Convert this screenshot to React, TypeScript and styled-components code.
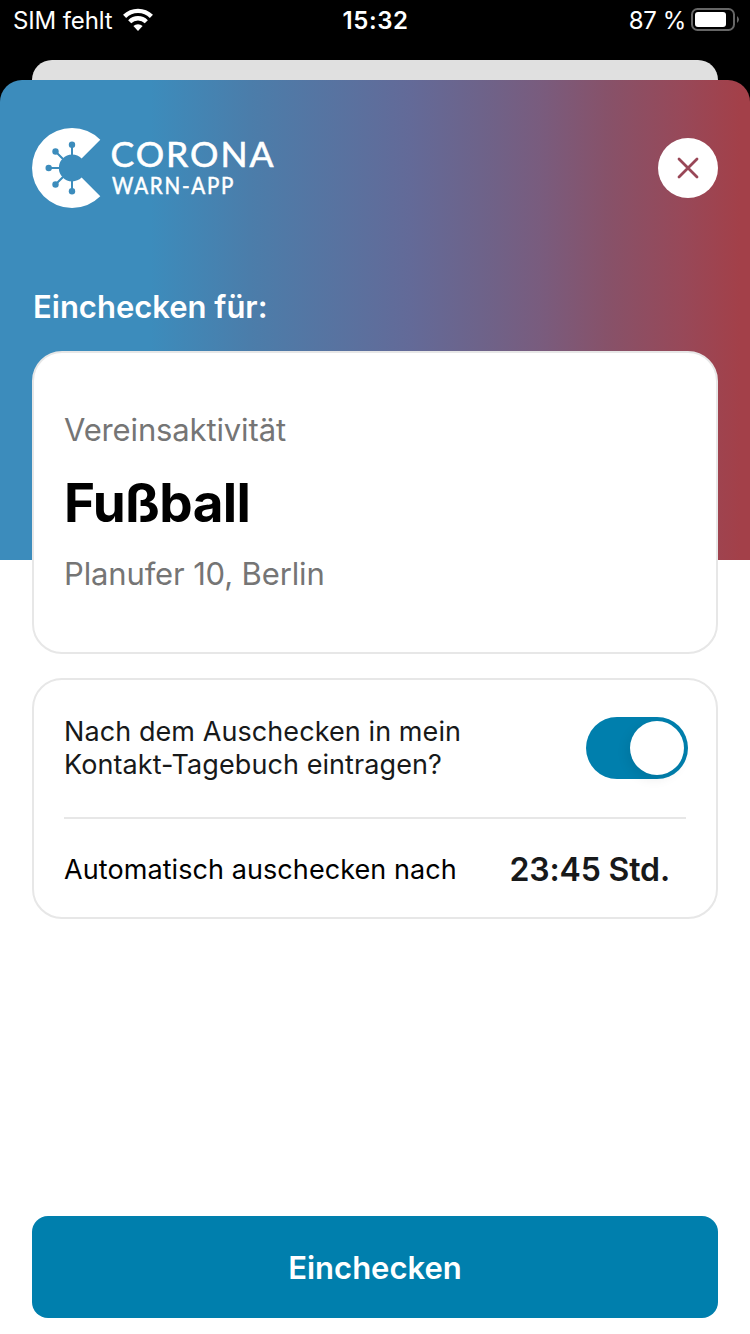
import React from 'react';
import styled, { createGlobalStyle } from 'styled-components';

const GlobalStyle = createGlobalStyle`
  * { box-sizing: border-box; }
  body { margin: 0; background: #000; font-family: Inter, "Liberation Sans", sans-serif; }
`;

const Screen = styled.div`
  width: 750px;
  height: 1334px;
  display: flex;
  flex-direction: column;
  background: #000;
  overflow: hidden;
`;

const StatusBar = styled.header`
  height: 60px;
  flex: none;
  display: grid;
  grid-template-columns: 1fr auto 1fr;
  align-items: start;
  padding: 5px 11px 0 13px;
  color: #fff;
  font-size: 24px;
  line-height: 32px;
`;

const Carrier = styled.div`
  display: flex;
  gap: 10px;
  letter-spacing: -0.12px;
`;

const Clock = styled.div`
  margin-right: 1px;
  font-weight: 600;
  letter-spacing: 0.6px;
`;

const Battery = styled.div`
  display: flex;
  justify-content: flex-end;
  gap: 5px;
  letter-spacing: -0.4px;
`;

const SheetBehind = styled.div`
  height: 20px;
  flex: none;
  margin: 0 32px;
  border-radius: 20px 20px 0 0;
  background: #e0e0e0;
`;

const Sheet = styled.main`
  flex: 1;
  display: flex;
  flex-direction: column;
  padding: 48px 32px 16px;
  border-radius: 22px 22px 0 0;
  background:
    linear-gradient(90deg, #3c8cbc 0, #3c8cbc 150px, #4b7daa 250px, #636a98 410px, #6f6288 490px, #795c7e 540px, #885168 612px, #984858 685px, #a34049 740px, #a34049 100%)
      0 0 / 100% 480px no-repeat,
    #fff;
`;

const TopRow = styled.div`
  height: 80px;
  display: flex;
  align-items: center;
  justify-content: space-between;
`;

const Brand = styled.div`
  display: flex;
  color: #fff;
  font-family: Lato, "Liberation Sans", sans-serif;
`;

const CloseButton = styled.button`
  width: 60px;
  height: 60px;
  padding: 0;
  border: 0;
  border-radius: 50%;
  background: #fff;
  display: grid;
  place-items: center;
`;

const Heading = styled.h1`
  margin: 79px 0 24px 1px;
  font-size: 31px;
  line-height: 40px;
  font-weight: 600;
  color: #fff;
`;

const Card = styled.section`
  border: 2px solid #e7e7e7;
  border-radius: 30px;
  background: #fff;
`;

const EventCard = styled(Card)`
  height: 303px;
  padding: 57px 30px 0;
`;

const EventDetail = styled.p`
  margin: 0;
  font-size: 31px;
  line-height: 40px;
  color: #757575;
  letter-spacing: -0.14px;
`;

const EventName = styled.h2`
  margin: 18px 0 15px;
  font-size: 53px;
  line-height: 71px;
  font-weight: 700;
  color: #000;
  letter-spacing: -0.6px;
`;

const SettingsCard = styled(Card)`
  height: 241px;
  margin-top: 24px;
  padding: 0 28px 0 30px;
`;

const DiaryRow = styled.div`
  height: 139px;
  margin-right: 2px;
  padding-bottom: 1px;
  border-bottom: 2px solid #e7e7e7;
  display: flex;
  align-items: center;
  justify-content: space-between;
`;

const Label = styled.div<{ $color?: string }>`
  font-size: 27px;
  line-height: 33px;
  color: ${(p) => p.$color ?? '#17191a'};
  letter-spacing: 0.08px;
  white-space: nowrap;
`;

const Switch = styled.div`
  width: 102px;
  height: 62px;
  margin-right: -2px;
  flex: none;
  padding: 4px;
  border-radius: 31px;
  background: #007fad;
  display: flex;
  justify-content: flex-end;
`;

const Knob = styled.div`
  width: 54px;
  height: 54px;
  border-radius: 50%;
  background: #fff;
  box-shadow: -3px 4px 12px rgba(0, 0, 0, 0.08);
`;

const CheckoutRow = styled.div`
  height: 98px;
  padding: 3px 18px 0 0;
  display: flex;
  align-items: center;
  justify-content: space-between;
`;

const Duration = styled.div`
  font-size: 32px;
  line-height: 40px;
  font-weight: 600;
  letter-spacing: -0.15px;
  color: #17191a;
`;

const PrimaryButton = styled.button`
  height: 102px;
  flex: none;
  margin-top: auto;
  padding: 0;
  border: 0;
  border-radius: 16px;
  background: #007fad;
  color: #fff;
  font-family: inherit;
  font-size: 31px;
  font-weight: 600;
`;

const WifiIcon = () => (
  <svg width="30" height="32" viewBox="0 0 30 32">
    <g fill="none" stroke="#fff" strokeWidth="4.4">
      <path d="M1.6 11.4A19 19 0 0 1 28.4 11.4" />
      <path d="M6.7 16.7A11.8 11.8 0 0 1 23.3 16.7" />
    </g>
    <path d="M15 26L10.4 21.1A6.6 6.6 0 0 1 19.6 21.1Z" fill="#fff" />
  </svg>
);

const BatteryIcon = () => (
  <svg width="48" height="32" viewBox="0 0 48 32">
    <rect x="1" y="4" width="42" height="21" rx="5.5" fill="none" stroke="#666" strokeWidth="2" />
    <rect x="4" y="7" width="31" height="15" rx="3" fill="#fff" />
    <path d="M46 11Q50 14.5 46 18Z" fill="#666" />
  </svg>
);

const Logo = () => (
  <svg width="250" height="80" viewBox="0 0 250 80" fill="#fff">
    <path d="M68.3 11.7A40 40 0 1 0 68.3 68.3L49.6 49.6A13.4 13.4 0 1 1 49.6 30.4Z" />
    <g stroke="#3c8cbc" strokeWidth="2">
      <path d="M40 28V17M31 31L23.5 23.5M28 40H17M31 49L23.5 56.5M40 52V63" />
    </g>
    <g fill="#3c8cbc">
      <circle cx="40" cy="16.7" r="3.2" />
      <circle cx="23.5" cy="23.5" r="3.2" />
      <circle cx="16.7" cy="40" r="3.2" />
      <circle cx="23.5" cy="56.5" r="3.2" />
      <circle cx="40" cy="63.3" r="3.2" />
    </g>
    <text x="78.5" y="38.5" fontSize="35.5" stroke="#fff" strokeWidth="0.6" textLength="163">CORONA</text>
    <text transform="translate(80 66) scale(0.92 1)" fontSize="22.4" stroke="#fff" strokeWidth="0.5" textLength="132">WARN-APP</text>
  </svg>
);

const CloseIcon = () => (
  <svg width="22" height="22" viewBox="0 0 22 22">
    <path d="M2 2L20 20M20 2L2 20" stroke="#994757" strokeWidth="2.8" strokeLinecap="round" />
  </svg>
);

export default function App() {
  return (
    <>
      <GlobalStyle />
      <Screen>
        <StatusBar>
          <Carrier>
            SIM fehlt
            <WifiIcon />
          </Carrier>
          <Clock>15:32</Clock>
          <Battery>
            87 %
            <BatteryIcon />
          </Battery>
        </StatusBar>
        <SheetBehind />
        <Sheet>
          <TopRow>
            <Brand>
              <Logo />
            </Brand>
            <CloseButton aria-label="Schließen">
              <CloseIcon />
            </CloseButton>
          </TopRow>
          <Heading>Einchecken für:</Heading>
          <EventCard>
            <EventDetail>Vereinsaktivität</EventDetail>
            <EventName>Fußball</EventName>
            <EventDetail>Planufer 10, Berlin</EventDetail>
          </EventCard>
          <SettingsCard>
            <DiaryRow>
              <Label>
                Nach dem Auschecken in mein
                <br />
                Kontakt-Tagebuch eintragen?
              </Label>
              <Switch role="switch" aria-checked="true">
                <Knob />
              </Switch>
            </DiaryRow>
            <CheckoutRow>
              <Label $color="#000">Automatisch auschecken nach</Label>
              <Duration>23:45 Std.</Duration>
            </CheckoutRow>
          </SettingsCard>
          <PrimaryButton>Einchecken</PrimaryButton>
        </Sheet>
      </Screen>
    </>
  );
}
